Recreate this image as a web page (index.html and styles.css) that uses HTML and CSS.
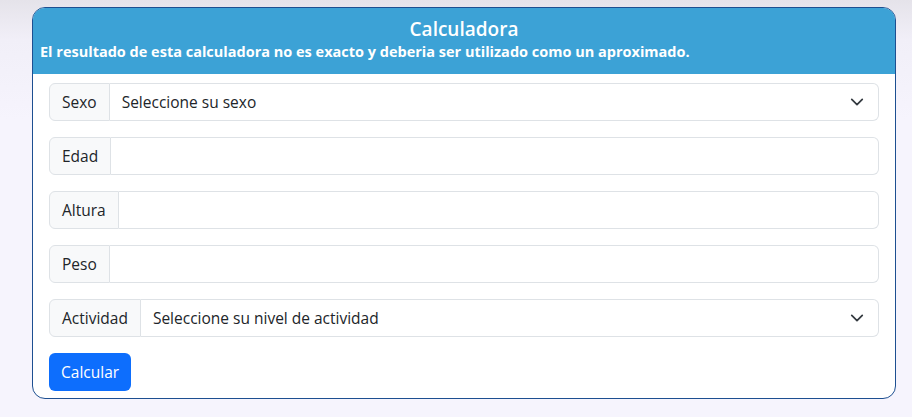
FILE: index.html
```html
<!DOCTYPE html>
<html lang="es">
<head>
<meta charset="utf-8">
<title>Calculadora</title>
<link rel="stylesheet" href="styles.css">
</head>
<body>
<div class="page">
  <div class="card">
    <div class="card-header">
      <h1 class="title">Calculadora</h1>
      <p class="subtitle">El resultado de esta calculadora no es exacto y deberia ser utilizado como un aproximado.</p>
    </div>
    <div class="card-body">
      <div class="input-group">
        <span class="group-label">Sexo</span>
        <div class="select">Seleccione su sexo
          <svg class="chev" width="16" height="16" viewBox="0 0 16 16"><path d="M2 5l6 6 6-6" fill="none" stroke="#343a40" stroke-width="2" stroke-linecap="round" stroke-linejoin="round"/></svg>
        </div>
      </div>
      <div class="input-group">
        <span class="group-label">Edad</span>
        <div class="input"></div>
      </div>
      <div class="input-group">
        <span class="group-label">Altura</span>
        <div class="input"></div>
      </div>
      <div class="input-group">
        <span class="group-label">Peso</span>
        <div class="input"></div>
      </div>
      <div class="input-group">
        <span class="group-label">Actividad</span>
        <div class="select">Seleccione su nivel de actividad
          <svg class="chev" width="16" height="16" viewBox="0 0 16 16"><path d="M2 5l6 6 6-6" fill="none" stroke="#343a40" stroke-width="2" stroke-linecap="round" stroke-linejoin="round"/></svg>
        </div>
      </div>
      <button class="btn">Calcular</button>
    </div>
  </div>
</div>
</body>
</html>
```
FILE: styles.css
```css
* { box-sizing: border-box; }
html, body { margin: 0; height: 100%; }
body {
  font-family: "Open Sans", "Noto Sans", sans-serif;
  font-size: 16px;
  color: #212529;
  background: linear-gradient(180deg, #e5e3ea 0px, #f1eff8 40px, #f6f4fd 120px, #f6f4fd 100%);
}
.page {
  padding: 7px 16px 0 32px;
}
.card {
  width: 864px;
  border: 1px solid #1d4f91;
  border-radius: 13px;
  background: #fff;
  overflow: hidden;
}
.card-header {
  background: #3ca2d6;
  color: #fff;
  height: 66px;
  padding: 8px 7px 0;
}
.title {
  margin: 0;
  text-align: center;
  font-size: 19px;
  font-weight: 600;
  line-height: 26px;
}
.subtitle {
  margin: 0;
  font-size: 14.5px;
  font-weight: 700;
  line-height: 20px;
}
.card-body {
  padding: 9px 16px 7px;
}
.input-group {
  display: flex;
  height: 38px;
  margin-bottom: 16px;
}
.group-label {
  display: flex;
  align-items: center;
  padding: 0 12px;
  background: #f8f9fa;
  border: 1px solid #dee2e6;
  border-radius: 6px 0 0 6px;
  font-size: 15.5px;
}
.input, .select {
  flex: 1;
  border: 1px solid #dee2e6;
  border-left: none;
  border-radius: 0 6px 6px 0;
  background: #fff;
}
.select {
  display: flex;
  align-items: center;
  padding: 0 12px;
  font-size: 15.5px;
  justify-content: space-between;
}
.chev { width: 14px; height: 14px; margin-right: 2px; }
.btn {
  display: block;
  height: 38px;
  padding: 0 12px;
  background: #0d6efd;
  color: #fff;
  border: none;
  border-radius: 6px;
  font-family: inherit;
  font-size: 15.5px;
}
```
